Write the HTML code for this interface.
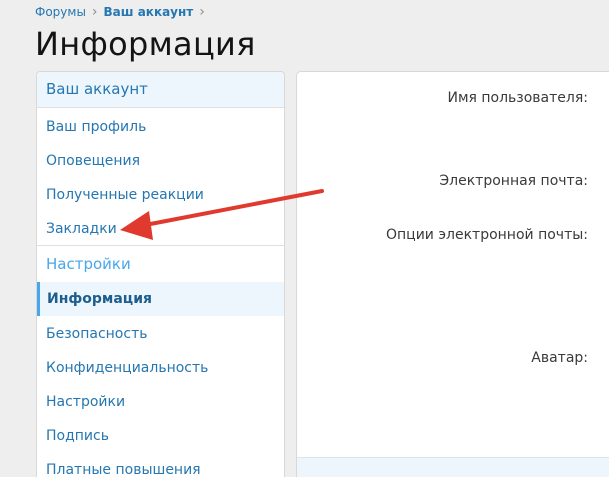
<!DOCTYPE html>
<html><head><meta charset="utf-8"><style>
*{margin:0;padding:0;box-sizing:border-box}
html,body{width:609px;height:477px;overflow:hidden}
body{background:#eeeeee;font-family:"Segoe UI","DejaVu Sans","Liberation Sans",sans-serif;position:relative}
.bc{position:absolute;left:35px;top:4px;font-size:12px;color:#2577b1}
.bc b{font-weight:bold}
.bc span{color:#8c8c8c;margin:0 6px;font-size:14px}
h1{position:absolute;left:35px;top:25px;font-size:32px;font-weight:normal;color:#141414;letter-spacing:0.3px}
.side{position:absolute;left:36px;top:71px;width:249px;height:406px;background:#fff;border:1px solid #d8d8d8;border-bottom:none;border-radius:4px 4px 0 0;overflow:hidden}
.hd{height:36px;background:#edf5fd;border-bottom:1px solid #dfdfdf;color:#2577b1;font-size:15px;padding:8px 9px}
.it{height:34px;font-size:14px;color:#2577b1;padding:10px 9px 0}
.sec{border-top:1px solid #dfdfdf;height:37px;font-size:15px;color:#47a7eb;padding:9px 9px}
.act{background:#edf5fd;border-left:3px solid #47a7eb;padding-left:7px;padding-top:9px;font-weight:bold;color:#1d5e8d}
.main{position:absolute;left:296px;top:71px;width:313px;height:406px;background:#fff;border:1px solid #d8d8d8;border-right:none;border-bottom:none;border-radius:5px 0 0 0;overflow:hidden}
.lb{position:absolute;right:21px;font-size:14px;color:#3a3a3a;white-space:nowrap}
.ft{position:absolute;left:0;right:0;top:385px;height:21px;background:#edf5fd;border-top:1px solid #d8e4f0}
</style></head><body>
<div class="bc">Форумы<span>›</span><b>Ваш аккаунт</b><span>›</span></div>
<h1>Информация</h1>
<div class="side">
<div class="hd">Ваш аккаунт</div>
<div class="it" style="margin-top:1px">Ваш профиль</div>
<div class="it">Оповещения</div>
<div class="it">Полученные реакции</div>
<div class="it">Закладки</div>
<div class="sec">Настройки</div>
<div class="it act">Информация</div>
<div class="it">Безопасность</div>
<div class="it">Конфиденциальность</div>
<div class="it">Настройки</div>
<div class="it">Подпись</div>
<div class="it">Платные повышения</div>
</div>
<div class="main">
<div class="lb" style="top:18px">Имя пользователя:</div>
<div class="lb" style="top:101px">Электронная почта:</div>
<div class="lb" style="top:155px">Опции электронной почты:</div>
<div class="lb" style="top:278px">Аватар:</div>
<div class="ft"></div>
</div>
<svg style="position:absolute;left:0;top:0" width="609" height="477">
<line x1="322" y1="191" x2="140" y2="226" stroke="#e0392e" stroke-width="4" stroke-linecap="round"/>
<polygon points="120,230 149,211 153,240" fill="#e0392e"/>
</svg>
</body></html>
